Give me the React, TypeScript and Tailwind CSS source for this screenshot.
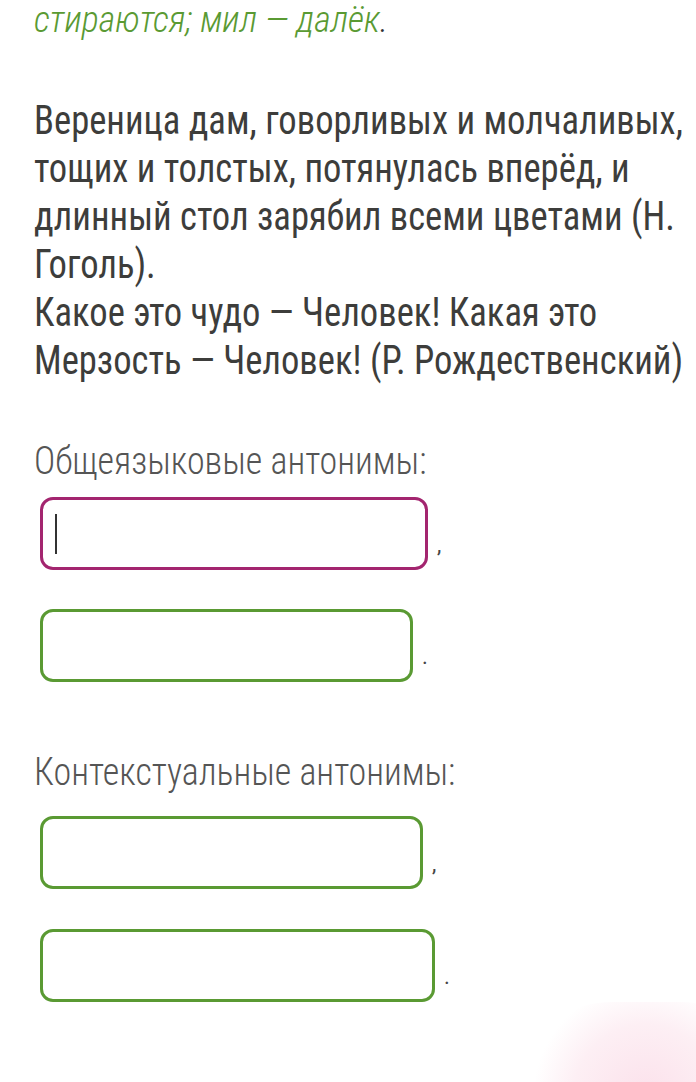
import React from 'react';

const answers = [
  { w: 'w-[388px]', color: 'border-[#a3256f]', mark: ',', active: true },
  { w: 'w-[373px]', color: 'border-[#5a9a33]', mark: '.', active: false },
];

const contextual = [
  { w: 'w-[383px]', color: 'border-[#5a9a33]', mark: ',', active: false },
  { w: 'w-[395px]', color: 'border-[#5a9a33]', mark: '.', active: false },
];

function AnswerBox({ w, color, mark, active }: { w: string; color: string; mark: string; active: boolean }) {
  return (
    <div className="flex items-end ml-[6px]">
      <div className={`${w} h-[73px] border-[3px] ${color} rounded-[13px] bg-white flex items-center pl-[12px]`}>
        {active && <span className="block w-[2px] h-[40px] bg-[#333]" />}
      </div>
      <span className="ml-[9px] mb-[14px] text-[22px] leading-none text-[#444]">{mark}</span>
    </div>
  );
}

export default function App() {
  const lines = [
    'Вереница дам, говорливых и молчаливых,',
    'тощих и толстых, потянулась вперёд, и',
    'длинный стол зарябил всеми цветами (Н.',
    'Гоголь).',
    'Какое это чудо — Человек! Какая это',
    'Мерзость — Человек! (Р. Рождественский)',
  ];

  return (
    <div className="relative w-[696px] h-[1082px] overflow-hidden bg-white px-[34px] font-['Roboto',sans-serif] font-stretch-condensed">
      <p className="text-[36px] leading-[40px] italic font-light text-[#5a9a33] whitespace-nowrap">
        стираются; мил — далёк<span className="text-[#333]">.</span>
      </p>

      <div className="mt-[57px] text-[40px] leading-[48px] text-[#3d3d3b] whitespace-nowrap origin-left [transform:scaleX(0.915)]">
        {lines.map((l) => (
          <div key={l}>{l}</div>
        ))}
      </div>

      <p className="mt-[52px] text-[38px] leading-[48px] font-light text-[#555] whitespace-nowrap origin-left [transform:scaleX(0.947)]">
        Общеязыковые антонимы:
      </p>
      <div className="mt-[12px] flex flex-col gap-[39px]">
        {answers.map((a, i) => (
          <AnswerBox key={i} {...a} />
        ))}
      </div>

      <p className="mt-[66px] text-[38px] leading-[48px] font-light text-[#555] whitespace-nowrap origin-left [transform:scaleX(0.947)]">
        Контекстуальные антонимы:
      </p>
      <div className="mt-[20px] flex flex-col gap-[40px]">
        {contextual.map((a, i) => (
          <AnswerBox key={i} {...a} />
        ))}
      </div>

      <div className="absolute right-[-80px] bottom-[-110px] w-[260px] h-[190px] rounded-full bg-[radial-gradient(circle,#fbe1eb_0%,#fdeff4_45%,rgba(255,255,255,0)_70%)]" />
    </div>
  );
}
